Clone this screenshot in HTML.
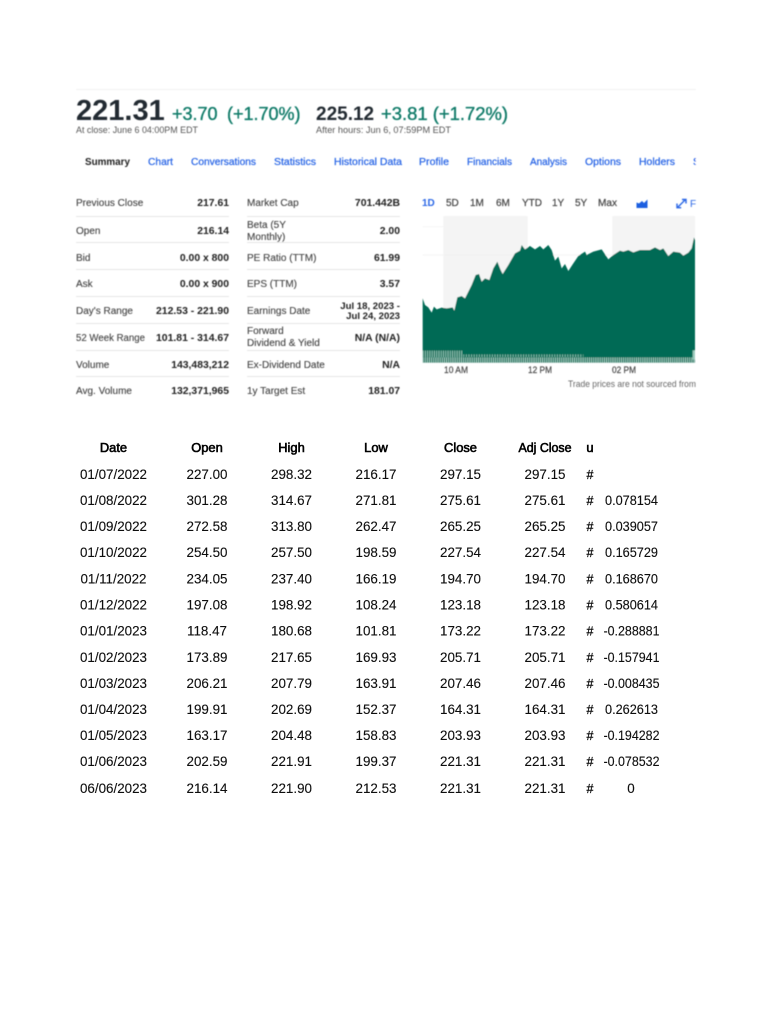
<!DOCTYPE html>
<html><head><meta charset="utf-8"><style>
html,body{margin:0;padding:0;background:#fff;width:768px;height:1024px;overflow:hidden}
svg{display:block;font-family:"Liberation Sans",sans-serif}
.l{font-size:10px;fill:#444;stroke:#444;stroke-width:.12}
.v{font-size:10.4px;font-weight:700;fill:#222;text-anchor:end}
.t{font-size:10px;fill:#2a66e6;stroke:#2a66e6;stroke-width:.25}
.p{font-size:10px;fill:#444;stroke:#444;stroke-width:.2}
.g{fill:#0b7a68;font-size:18px;stroke:#0b7a68;stroke-width:.35}
.a{font-size:9.5px;fill:#444;stroke:#444;stroke-width:.2;font-weight:400}
.tb text{font-size:13.4px;fill:#111;stroke:#111;stroke-width:.12;text-anchor:middle}
.tb .h{font-size:12.9px;fill:#000;stroke:#000;stroke-width:.6}
.tb .s{font-size:12.5px;stroke-width:.3}
</style></head><body>
<svg width="768" height="1024" viewBox="0 0 768 1024" xmlns="http://www.w3.org/2000/svg">
<defs>
<filter id="b" filterUnits="userSpaceOnUse" x="0" y="0" width="768" height="1024"><feGaussianBlur stdDeviation="0.45"/></filter>
<filter id="c" filterUnits="userSpaceOnUse" x="0" y="0" width="768" height="1024"><feGaussianBlur stdDeviation="0.25"/></filter>
</defs>
<g filter="url(#b)">
<rect x="76" y="89" width="620" height="1" fill="#f2f2f2"/>
<text x="76" y="120" font-size="29" font-weight="700" fill="#232a31">221.31</text>
<text x="172" y="120" class="g">+3.70</text>
<text x="227" y="120" class="g">(+1.70%)</text>
<text x="316" y="120" font-size="19" font-weight="700" fill="#232a31">225.12</text>
<text x="381" y="120" class="g" textLength="127" lengthAdjust="spacingAndGlyphs">+3.81 (+1.72%)</text>
<text x="76" y="133" font-size="9.3" fill="#555" textLength="122" lengthAdjust="spacingAndGlyphs">At close: June 6 04:00PM EDT</text>
<text x="316" y="133" font-size="9.3" fill="#555" textLength="135" lengthAdjust="spacingAndGlyphs">After hours: Jun 6, 07:59PM EDT</text>

<text x="85" y="165" font-size="10" font-weight="700" fill="#222" textLength="45" lengthAdjust="spacingAndGlyphs">Summary</text>
<text x="148" y="165" class="t" textLength="25" lengthAdjust="spacingAndGlyphs">Chart</text>
<text x="191" y="165" class="t" textLength="65" lengthAdjust="spacingAndGlyphs">Conversations</text>
<text x="274" y="165" class="t" textLength="42" lengthAdjust="spacingAndGlyphs">Statistics</text>
<text x="334" y="165" class="t" textLength="68" lengthAdjust="spacingAndGlyphs">Historical Data</text>
<text x="419" y="165" class="t" textLength="30" lengthAdjust="spacingAndGlyphs">Profile</text>
<text x="467" y="165" class="t" textLength="45" lengthAdjust="spacingAndGlyphs">Financials</text>
<text x="530" y="165" class="t" textLength="37" lengthAdjust="spacingAndGlyphs">Analysis</text>
<text x="585" y="165" class="t" textLength="36" lengthAdjust="spacingAndGlyphs">Options</text>
<text x="639" y="165" class="t" textLength="36" lengthAdjust="spacingAndGlyphs">Holders</text>
<text x="693" y="165" class="t">S</text>
<rect x="696" y="150" width="72" height="20" fill="#fff"/>

<g fill="#e6e6e6">
<rect x="76" y="216" width="153" height="1"/><rect x="76" y="242" width="153" height="1"/><rect x="76" y="269" width="153" height="1"/><rect x="76" y="296" width="153" height="1"/><rect x="76" y="323" width="153" height="1"/><rect x="76" y="350" width="153" height="1"/><rect x="76" y="376" width="153" height="1"/>
<rect x="247" y="216" width="153" height="1"/><rect x="247" y="242" width="153" height="1"/><rect x="247" y="269" width="153" height="1"/><rect x="247" y="296" width="153" height="1"/><rect x="247" y="323" width="153" height="1"/><rect x="247" y="350" width="153" height="1"/><rect x="247" y="376" width="153" height="1"/>
</g>
<text class="l" x="76" y="206">Previous Close</text><text class="v" x="229" y="206">217.61</text>
<text class="l" x="76" y="234">Open</text><text class="v" x="229" y="234">216.14</text>
<text class="l" x="76" y="261">Bid</text><text class="v" x="229" y="261">0.00 x 800</text>
<text class="l" x="76" y="287">Ask</text><text class="v" x="229" y="287">0.00 x 900</text>
<text class="l" x="76" y="314">Day's Range</text><text class="v" x="229" y="314" textLength="73" lengthAdjust="spacingAndGlyphs">212.53 - 221.90</text>
<text class="l" x="76" y="341" textLength="69" lengthAdjust="spacingAndGlyphs">52 Week Range</text><text class="v" x="229" y="341" textLength="73" lengthAdjust="spacingAndGlyphs">101.81 - 314.67</text>
<text class="l" x="76" y="368">Volume</text><text class="v" x="229" y="368">143,483,212</text>
<text class="l" x="76" y="394">Avg. Volume</text><text class="v" x="229" y="394">132,371,965</text>

<text class="l" x="247" y="206">Market Cap</text><text class="v" x="400" y="206">701.442B</text>
<text class="l" x="247" y="228">Beta (5Y</text><text class="l" x="247" y="240">Monthly)</text><text class="v" x="400" y="234">2.00</text>
<text class="l" x="247" y="261">PE Ratio (TTM)</text><text class="v" x="400" y="261">61.99</text>
<text class="l" x="247" y="287">EPS (TTM)</text><text class="v" x="400" y="287">3.57</text>
<text class="l" x="247" y="314">Earnings Date</text>
<text class="v" x="400" y="309" style="font-size:9.6px">Jul 18, 2023 -</text><text class="v" x="400" y="319" style="font-size:9.6px">Jul 24, 2023</text>
<text class="l" x="247" y="334">Forward</text><text class="l" x="247" y="346">Dividend &amp; Yield</text><text class="v" x="400" y="341">N/A (N/A)</text>
<text class="l" x="247" y="368">Ex-Dividend Date</text><text class="v" x="400" y="368">N/A</text>
<text class="l" x="247" y="394">1y Target Est</text><text class="v" x="400" y="394">181.07</text>

<text x="422" y="206" font-size="10" font-weight="700" fill="#2a66e6">1D</text>
<text x="446" y="206" class="p">5D</text><text x="470" y="206" class="p">1M</text><text x="496" y="206" class="p">6M</text><text x="522" y="206" class="p">YTD</text><text x="552" y="206" class="p">1Y</text><text x="575" y="206" class="p">5Y</text><text x="598" y="206" class="p" textLength="19" lengthAdjust="spacingAndGlyphs">Max</text>
<path d="M636.5 208V202.5L639 203.5L642 201L644 203L647.5 199.5V208Z" fill="#1a5fe0"/>
<path d="M677.5 207.5L685.5 199.5M682 199.5H686V203.5M677 203.5V207.7H681.2" fill="none" stroke="#2a66e6" stroke-width="1.4"/>
<text x="690" y="207" font-size="10" fill="#2a66e6">F</text>

<g transform="translate(410 190) scale(.33333)">
<rect x="100" y="78" width="253" height="440" fill="#f4f4f4"/>
<rect x="607" y="78" width="248" height="440" fill="#f4f4f4"/>
<path d="M38 195H855M38 110H100" stroke="#f0f0f0" stroke-width="2" fill="none"/>
<path d="M38 325L45 345L55 352L65 368L72 350L80 358L95 353L110 355L128 352L133 362L142 322L155 318L165 325L185 285L197 255L207 252L215 275L225 265L238 270L250 235L262 215L272 240L278 252L295 225L315 190L330 182L335 165L345 178L360 168L375 178L390 168L400 178L415 165L425 180L435 212L445 200L455 235L465 222L475 243L490 220L505 198L525 185L530 195L550 185L575 178L595 208L610 195L630 182L640 185L655 180L670 187L690 180L720 180L735 172L750 180L760 175L775 198L790 185L810 188L820 197L835 188L845 175L852 142L855 150V518H38Z" fill="#046b55"/>
<path d="M38 510H855" stroke="#b4d9ce" stroke-width="16" stroke-dasharray="2.6 3.8" fill="none"/>
<path d="M38 492H160" stroke="#9ccbbd" stroke-width="20" stroke-dasharray="2.6 4.2" fill="none"/>
<path d="M160 497H520" stroke="#8cc3b3" stroke-width="8" stroke-dasharray="2.6 5.2" fill="none"/>
<path d="M848 495H855" stroke="#9ccbbd" stroke-width="28" fill="none"/>
</g>
<text class="a" x="444" y="373" textLength="24" lengthAdjust="spacingAndGlyphs">10 AM</text>
<text class="a" x="528" y="373" textLength="24" lengthAdjust="spacingAndGlyphs">12 PM</text>
<text class="a" x="612" y="373" textLength="24" lengthAdjust="spacingAndGlyphs">02 PM</text>
<text x="568" y="387" font-size="9.3" fill="#666" textLength="128" lengthAdjust="spacingAndGlyphs">Trade prices are not sourced from</text>
</g>

<g class="tb" filter="url(#c)">
<text class="h" x="113.5" y="452">Date</text><text class="h" x="207" y="452">Open</text><text class="h" x="291.5" y="452">High</text><text class="h" x="376" y="452">Low</text><text class="h" x="460.5" y="452">Close</text><text class="h" x="545" y="452" textLength="53" lengthAdjust="spacingAndGlyphs">Adj Close</text><text class="h" x="590" y="452">u</text>

<text x="113.5" y="479">01/07/2022</text><text x="207" y="479">227.00</text><text x="291.5" y="479">298.32</text><text x="376" y="479">216.17</text><text x="460.5" y="479">297.15</text><text x="545" y="479">297.15</text><text class="s" x="590" y="479">#</text>
<text x="113.5" y="505">01/08/2022</text><text x="207" y="505">301.28</text><text x="291.5" y="505">314.67</text><text x="376" y="505">271.81</text><text x="460.5" y="505">275.61</text><text x="545" y="505">275.61</text><text class="s" x="590" y="505">#</text><text x="631.5" y="505" textLength="53" lengthAdjust="spacingAndGlyphs">0.078154</text>
<text x="113.5" y="531">01/09/2022</text><text x="207" y="531">272.58</text><text x="291.5" y="531">313.80</text><text x="376" y="531">262.47</text><text x="460.5" y="531">265.25</text><text x="545" y="531">265.25</text><text class="s" x="590" y="531">#</text><text x="631.5" y="531" textLength="53" lengthAdjust="spacingAndGlyphs">0.039057</text>
<text x="113.5" y="557">01/10/2022</text><text x="207" y="557">254.50</text><text x="291.5" y="557">257.50</text><text x="376" y="557">198.59</text><text x="460.5" y="557">227.54</text><text x="545" y="557">227.54</text><text class="s" x="590" y="557">#</text><text x="631.5" y="557" textLength="53" lengthAdjust="spacingAndGlyphs">0.165729</text>
<text x="113.5" y="583.5">01/11/2022</text><text x="207" y="583.5">234.05</text><text x="291.5" y="583.5">237.40</text><text x="376" y="583.5">166.19</text><text x="460.5" y="583.5">194.70</text><text x="545" y="583.5">194.70</text><text class="s" x="590" y="583.5">#</text><text x="631.5" y="583.5" textLength="53" lengthAdjust="spacingAndGlyphs">0.168670</text>
<text x="113.5" y="609.5">01/12/2022</text><text x="207" y="609.5">197.08</text><text x="291.5" y="609.5">198.92</text><text x="376" y="609.5">108.24</text><text x="460.5" y="609.5">123.18</text><text x="545" y="609.5">123.18</text><text class="s" x="590" y="609.5">#</text><text x="631.5" y="609.5" textLength="53" lengthAdjust="spacingAndGlyphs">0.580614</text>
<text x="113.5" y="635.5">01/01/2023</text><text x="207" y="635.5">118.47</text><text x="291.5" y="635.5">180.68</text><text x="376" y="635.5">101.81</text><text x="460.5" y="635.5">173.22</text><text x="545" y="635.5">173.22</text><text class="s" x="590" y="635.5">#</text><text x="631.5" y="635.5" textLength="56" lengthAdjust="spacingAndGlyphs">-0.288881</text>
<text x="113.5" y="662">01/02/2023</text><text x="207" y="662">173.89</text><text x="291.5" y="662">217.65</text><text x="376" y="662">169.93</text><text x="460.5" y="662">205.71</text><text x="545" y="662">205.71</text><text class="s" x="590" y="662">#</text><text x="631.5" y="662" textLength="56" lengthAdjust="spacingAndGlyphs">-0.157941</text>
<text x="113.5" y="688">01/03/2023</text><text x="207" y="688">206.21</text><text x="291.5" y="688">207.79</text><text x="376" y="688">163.91</text><text x="460.5" y="688">207.46</text><text x="545" y="688">207.46</text><text class="s" x="590" y="688">#</text><text x="631.5" y="688" textLength="56" lengthAdjust="spacingAndGlyphs">-0.008435</text>
<text x="113.5" y="714">01/04/2023</text><text x="207" y="714">199.91</text><text x="291.5" y="714">202.69</text><text x="376" y="714">152.37</text><text x="460.5" y="714">164.31</text><text x="545" y="714">164.31</text><text class="s" x="590" y="714">#</text><text x="631.5" y="714" textLength="53" lengthAdjust="spacingAndGlyphs">0.262613</text>
<text x="113.5" y="740">01/05/2023</text><text x="207" y="740">163.17</text><text x="291.5" y="740">204.48</text><text x="376" y="740">158.83</text><text x="460.5" y="740">203.93</text><text x="545" y="740">203.93</text><text class="s" x="590" y="740">#</text><text x="631.5" y="740" textLength="56" lengthAdjust="spacingAndGlyphs">-0.194282</text>
<text x="113.5" y="766">01/06/2023</text><text x="207" y="766">202.59</text><text x="291.5" y="766">221.91</text><text x="376" y="766">199.37</text><text x="460.5" y="766">221.31</text><text x="545" y="766">221.31</text><text class="s" x="590" y="766">#</text><text x="631.5" y="766" textLength="56" lengthAdjust="spacingAndGlyphs">-0.078532</text>
<text x="113.5" y="793">06/06/2023</text><text x="207" y="793">216.14</text><text x="291.5" y="793">221.90</text><text x="376" y="793">212.53</text><text x="460.5" y="793">221.31</text><text x="545" y="793">221.31</text><text class="s" x="590" y="793">#</text><text x="631" y="793">0</text>
</g>
</svg>
</body></html>
